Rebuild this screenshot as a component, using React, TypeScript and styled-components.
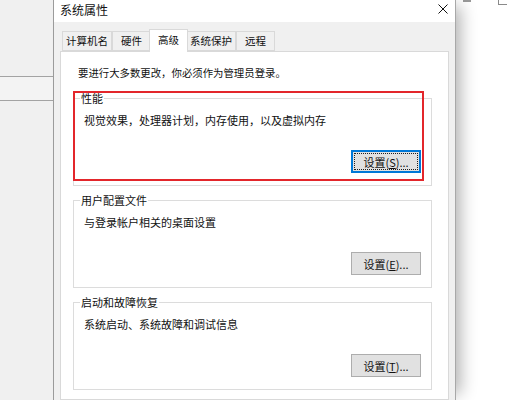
import styled, { createGlobalStyle } from "styled-components";

const GlobalStyle = createGlobalStyle`
  html, body {
    margin: 0;
    padding: 0;
    background: #ffffff;
  }
  body {
    font-family: "Noto Sans CJK SC", "Noto Sans", sans-serif;
    font-size: 11px;
    color: #000000;
  }
`;

const Desktop = styled.div`
  display: flex;
  width: 507px;
  height: 400px;
  overflow: hidden;
  background: #ffffff;
`;

const SideWindow = styled.div`
  width: 53px;
  flex-shrink: 0;
  display: flex;
  flex-direction: column;
  background: #f0f0f0;
  border-right: 1px solid #9c9c9c;
`;

const SideBand = styled.div<{ $h?: number; $tone?: string }>`
  height: ${(p) => (p.$h ? `${p.$h}px` : "auto")};
  flex: ${(p) => (p.$h ? "none" : "1")};
  background: ${(p) => p.$tone || "#f0f0f0"};
  border-bottom: ${(p) => (p.$h ? "1px solid #a3a3a3" : "none")};
`;

const Dialog = styled.div`
  width: 401px;
  flex-shrink: 0;
  display: flex;
  flex-direction: column;
  border-right: 1px solid #a8a8a8;
  box-shadow: 10px 0 16px -6px rgba(0, 0, 0, 0.32);
  position: relative;
  z-index: 1;
`;

const TitleBar = styled.div`
  height: 22px;
  display: flex;
  align-items: center;
  justify-content: space-between;
  padding: 0 6px;
  background: #ffffff;
`;

const Title = styled.span`
  font-size: 12px;
  line-height: 14px;
  margin-top: -3px;
  color: #111111;
`;

const CloseIcon = styled.svg`
  width: 10px;
  height: 10px;
  margin-top: -4px;
  margin-right: 1px;
`;

const Body = styled.div`
  flex: 1;
  display: flex;
  flex-direction: column;
  background: #f0f0f0;
  padding: 7px 6px 0 6px;
`;

const TabStrip = styled.div`
  display: flex;
  align-items: flex-end;
  padding-left: 2px;
  position: relative;
  z-index: 2;
  margin-bottom: -1px;
`;

const Tab = styled.div<{ $active?: boolean }>`
  min-width: 39px;
  box-sizing: border-box;
  height: ${(p) => (p.$active ? "23px" : "20px")};
  padding: 0 3px;
  margin: ${(p) => (p.$active ? "0 -2px" : "0 0 1px 0")};
  display: flex;
  align-items: center;
  justify-content: center;
  font-size: 10.5px;
  line-height: 12px;
  color: #111111;
  background: ${(p) => (p.$active ? "#ffffff" : "#f0f0f0")};
  border: 1px solid #d9d9d9;
  border-bottom: ${(p) => (p.$active ? "none" : "1px solid #d9d9d9")};
  & + & {
    border-left: ${(p) => (p.$active ? "1px solid #d9d9d9" : "none")};
  }
  position: relative;
  z-index: ${(p) => (p.$active ? 2 : 1)};
  padding-bottom: ${(p) => (p.$active ? "3px" : "0")};
`;

const TabPanel = styled.div`
  flex: 1;
  background: #ffffff;
  border: 1px solid #d9d9d9;
  padding: 14px 16px 0 12px;
  display: flex;
  flex-direction: column;
`;

const Notice = styled.p`
  margin: 0 0 11px 5px;
  line-height: 14px;
  font-size: 10.4px;
  color: #111111;
`;

const Highlight = styled.div`
  position: relative;
`;

const RedMark = styled.div`
  position: absolute;
  top: 0;
  left: 0;
  right: 8px;
  bottom: 5px;
  border: 2px solid #e3262b;
  pointer-events: none;
`;

const Group = styled.fieldset`
  margin: 0;
  border: 1px solid #dcdcdc;
  padding: 0 10px 12px 10px;
  display: flex;
  flex-direction: column;
  min-width: 0;
`;

const GroupSpacer = styled.div`
  height: 7px;
`;

const Legend = styled.legend`
  margin-left: -4px;
  padding: 0 1px;
  line-height: 14px;
  color: #111111;
`;

const GroupText = styled.div`
  margin-top: 8px;
  line-height: 14px;
  color: #111111;
`;

const ButtonRow = styled.div`
  display: flex;
  justify-content: flex-end;
  margin-top: 23px;
`;

const Button = styled.button<{ $default?: boolean }>`
  width: 70px;
  height: 23px;
  box-sizing: border-box;
  font-family: inherit;
  font-size: 11px;
  line-height: 12px;
  color: #111111;
  background: #e1e1e1;
  border: ${(p) => (p.$default ? "2px solid #0078d7" : "1px solid #adadad")};
  padding: 0;
  position: relative;
  &::after {
    content: "";
    display: ${(p) => (p.$default ? "block" : "none")};
    position: absolute;
    inset: 1px;
    border: 1px dotted #1f1f1f;
  }
`;

const Key = styled.span`
  text-decoration: underline;
`;

const RightPane = styled.div`
  flex: 1;
  display: flex;
  align-items: flex-start;
  background: #ffffff;
`;

const TopTick = styled.div`
  width: 8px;
  height: 2px;
  margin-left: 7px;
  background: #9a9a9a;
`;

const TopCorner = styled.div`
  width: 10px;
  height: 4px;
  margin-left: 27px;
  border-left: 1px solid #8a8a8a;
  border-bottom: 1px solid #8a8a8a;
`;

type GroupInfo = {
  title: string;
  text: string;
  key: string;
  isDefault?: boolean;
};

const groups: GroupInfo[] = [
  { title: "性能", text: "视觉效果，处理器计划，内存使用，以及虚拟内存", key: "S", isDefault: true },
  { title: "用户配置文件", text: "与登录帐户相关的桌面设置", key: "E" },
  { title: "启动和故障恢复", text: "系统启动、系统故障和调试信息", key: "T" },
];

const tabs = ["计算机名", "硬件", "高级", "系统保护", "远程"];

function SettingsGroup({ info }: { info: GroupInfo }) {
  return (
    <Group>
      <Legend>{info.title}</Legend>
      <GroupText>{info.text}</GroupText>
      <ButtonRow>
        <Button $default={info.isDefault}>
          设置(<Key>{info.key}</Key>)...
        </Button>
      </ButtonRow>
    </Group>
  );
}

export default function App() {
  return (
    <>
      <GlobalStyle />
      <Desktop>
        <SideWindow>
          <SideBand $h={76} />
          <SideBand $h={23} $tone="#f3f3f3" />
          <SideBand />
        </SideWindow>
        <Dialog>
          <TitleBar>
            <Title>系统属性</Title>
            <CloseIcon viewBox="0 0 10 10">
              <path d="M0.5 0.5 L9.5 9.5 M9.5 0.5 L0.5 9.5" stroke="#111" strokeWidth="1" fill="none" />
            </CloseIcon>
          </TitleBar>
          <Body>
            <TabStrip>
              {tabs.map((t) => (
                <Tab key={t} $active={t === "高级"}>
                  {t}
                </Tab>
              ))}
            </TabStrip>
            <TabPanel>
              <Notice>要进行大多数更改，你必须作为管理员登录。</Notice>
              <Highlight>
                <SettingsGroup info={groups[0]} />
                <RedMark />
              </Highlight>
              <GroupSpacer />
              <SettingsGroup info={groups[1]} />
              <GroupSpacer />
              <SettingsGroup info={groups[2]} />
            </TabPanel>
          </Body>
        </Dialog>
        <RightPane>
          <TopTick />
          <TopCorner />
        </RightPane>
      </Desktop>
    </>
  );
}
